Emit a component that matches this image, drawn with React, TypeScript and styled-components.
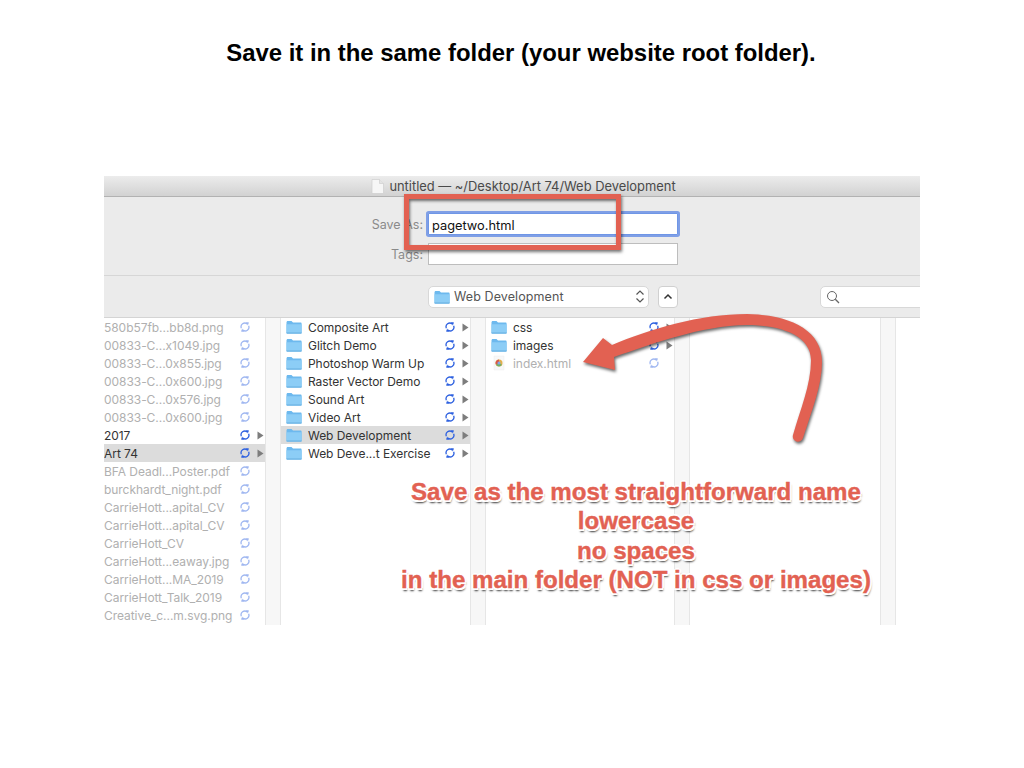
import React from "react";
import styled, { createGlobalStyle } from "styled-components";

const Global = createGlobalStyle`
  html, body { margin: 0; padding: 0; background: #fff; }
  * { box-sizing: border-box; }
`;

const Slide = styled.div`
  position: relative;
  width: 1024px;
  height: 768px;
  overflow: hidden;
  background: #fff;
  padding-top: 39px;
  font-family: "Inter", "Liberation Sans", sans-serif;
`;

const Heading = styled.h1`
  margin: 0 0 109px;
  height: 28px;
  padding-left: 18px;
  font: bold 23.9px/28px "Liberation Sans", Arial, sans-serif;
  color: #000;
  text-align: center;
`;

const Dialog = styled.div`
  width: 816px;
  height: 449px;
  margin-left: 104px;
  display: flex;
  flex-direction: column;
  background: #ebebeb;
  overflow: hidden;
`;

const TitleBar = styled.div`
  height: 21px;
  flex: none;
  display: flex;
  align-items: center;
  justify-content: center;
  gap: 5px;
  padding-left: 23px;
  background: linear-gradient(#ececec, #d2d2d2);
  border-bottom: 1px solid #b2b2b2;
  font-size: 12.9px;
  color: #4a4a4a;
`;

const Form = styled.div`
  height: 79px;
  flex: none;
  display: grid;
  grid-template-columns: 319px 250px;
  grid-auto-rows: 22px;
  column-gap: 5px;
  row-gap: 8px;
  align-content: start;
  padding-top: 16px;
  border-bottom: 1px solid #d6d6d6;
`;

const FieldLabel = styled.label`
  font-size: 12.5px;
  line-height: 24px;
  color: #8a8a8a;
  text-align: right;
`;

const NameField = styled.div`
  background: #fff;
  border: 1px solid #6f96e6;
  box-shadow: 0 0 0 2px #7f9fe6;
  border-radius: 1px;
  padding-left: 3px;
  font-size: 12.8px;
  line-height: 23px;
  color: #111;
`;

const TagsField = styled.div`
  background: #fff;
  border: 1px solid #bdbdbd;
`;

const Toolbar = styled.div`
  height: 42px;
  flex: none;
  display: flex;
  align-items: center;
  padding-left: 324px;
  border-bottom: 1px solid #d4d4d4;
`;

const Popup = styled.div`
  width: 221px;
  height: 22px;
  flex: none;
  display: flex;
  align-items: center;
  gap: 4px;
  padding: 0 3px 0 5px;
  background: #fff;
  border: 1px solid #d8d8d8;
  border-radius: 5px;
  font-size: 12.5px;
  color: #555;
  letter-spacing: 0.1px;
`;

const PopupText = styled.span`
  flex: 1;
`;

const UpButton = styled.div`
  width: 20px;
  height: 22px;
  flex: none;
  margin-left: 9px;
  display: flex;
  align-items: center;
  justify-content: center;
  background: #fff;
  border: 1px solid #d0d0d0;
  border-radius: 4px;
`;

const SearchBox = styled.div`
  width: 110px;
  height: 22px;
  margin-left: 142px;
  display: flex;
  align-items: center;
  padding-left: 5px;
  flex: none;
  background: #fff;
  border: 1px solid #d8d8d8;
  border-radius: 5px;
`;

const Columns = styled.div`
  flex: 1;
  min-height: 0;
  display: flex;
  background: #f7f7f7;
`;

const Column = styled.div<{ $w: number; $first?: boolean }>`
  width: ${(p) => p.$w}px;
  flex: none;
  margin-right: 14px;
  background: #fff;
  border-left: ${(p) => (p.$first ? "none" : "1px solid #e6e6e6")};
  border-right: 1px solid #e6e6e6;
`;

const Row = styled.div<{ $selected?: boolean; $indent: number }>`
  height: 18px;
  display: flex;
  align-items: center;
  padding-left: ${(p) => p.$indent}px;
  background: ${(p) => (p.$selected ? "#dcdcdc" : "transparent")};
`;

const RowName = styled.span<{ $dim?: boolean; $gap?: boolean }>`
  flex: 1;
  min-width: 0;
  margin-left: ${(p) => (p.$gap ? 6 : 0)}px;
  font-size: 12px;
  letter-spacing: -0.05px;
  white-space: nowrap;
  color: ${(p) => (p.$dim ? "#b0b0b0" : "#333")};
`;

const SyncSlot = styled.span<{ $dim?: boolean }>`
  flex: none;
  width: 10px;
  height: 10px;
  display: flex;
  opacity: ${(p) => (p.$dim ? 0.45 : 1)};
`;

const ArrowSlot = styled.span`
  flex: none;
  width: 15px;
  height: 10px;
  display: flex;
  align-items: center;
  justify-content: flex-end;
  padding-right: 1px;
`;

const Frame = styled.div`
  position: absolute;
  left: 404px;
  top: 194px;
  width: 217px;
  height: 56px;
  border: 5px solid #e26152;
  box-shadow: 1px 2px 3px rgba(0, 0, 0, 0.55), inset 1px 2px 3px rgba(0, 0, 0, 0.55);
`;

const ArrowArt = styled.svg`
  position: absolute;
  left: 0;
  top: 0;
  filter: drop-shadow(1px 2px 1.5px rgba(0, 0, 0, 0.6));
  pointer-events: none;
`;

const Note = styled.div`
  position: absolute;
  left: 336px;
  width: 600px;
  top: 477px;
  text-align: center;
  font: bold 24.1px/29.4px "Liberation Sans", Arial, sans-serif;
  color: #e26152;
  -webkit-text-stroke: 0.4px #e26152;
  text-shadow: -2px 0 0 #fff, 2px 0 0 #fff, 0 -2px 0 #fff, 0 2px 0 #fff,
    -1.5px -1.5px 0 #fff, 1.5px -1.5px 0 #fff, -1.5px 1.5px 0 #fff, 1.5px 1.5px 0 #fff,
    1px 3px 2px rgba(0, 0, 0, 0.8);
`;

const Folder = () => (
  <svg width="16" height="14" viewBox="0 0 16 14">
    <path d="M0.5 2.5C0.5 1.6 1 1 1.8 1H5.5L7 2.5H14.5C15.3 2.5 15.6 3 15.6 3.6V12.4C15.6 13 15.2 13.5 14.5 13.5H1.6C1 13.5 0.5 13 0.5 12.4Z" fill="#6db9ee" />
    <path d="M0.5 4.2H15.6V12.4C15.6 13 15.2 13.5 14.5 13.5H1.6C1 13.5 0.5 13 0.5 12.4Z" fill="#8ccdf6" />
    <path d="M0.5 13H15.6" stroke="#5da6dc" strokeWidth="0.8" />
  </svg>
);

const Sync = () => (
  <svg width="10" height="10" viewBox="0 0 10 10" fill="none">
    <path d="M1.4 6.3A3.7 3.7 0 0 1 7.2 2" stroke="#2f62e0" strokeWidth="1.3" />
    <path d="M8.6 3.7A3.7 3.7 0 0 1 2.8 8" stroke="#2f62e0" strokeWidth="1.3" />
    <path d="M6 0L9 .6 7.8 3.6Z" fill="#2f62e0" />
    <path d="M4 10L1 9.4 2.2 6.4Z" fill="#2f62e0" />
  </svg>
);

const Triangle = () => (
  <svg width="7" height="9" viewBox="0 0 7 9">
    <path d="M0.5 0.5L6.5 4.5 0.5 8.5Z" fill="#7d7d7d" />
  </svg>
);

const Chrome = () => (
  <svg width="16" height="16" viewBox="0 0 16 16">
    <path d="M3 1H13V15H3Z" fill="#f8f8f8" stroke="#eee" strokeWidth="0.5" />
    <circle cx="8" cy="8" r="3.5" fill="#e2b04a" />
    <path d="M8 4.5A3.5 3.5 0 0 0 5 9.8L8 8Z" fill="#d9584a" />
    <path d="M5 9.8A3.5 3.5 0 0 0 11 9.8L8 8Z" fill="#6fae6a" />
    <circle cx="8" cy="8" r="1.5" fill="#7fa7e8" />
  </svg>
);

type Item = { name: string; dim?: boolean; arrow?: boolean; selected?: boolean; icon?: "folder" | "chrome" };

const col1: Item[] = [
  { name: "580b57fb...bb8d.png", dim: true },
  { name: "00833-C...x1049.jpg", dim: true },
  { name: "00833-C...0x855.jpg", dim: true },
  { name: "00833-C...0x600.jpg", dim: true },
  { name: "00833-C...0x576.jpg", dim: true },
  { name: "00833-C...0x600.jpg", dim: true },
  { name: "2017", arrow: true },
  { name: "Art 74", arrow: true, selected: true },
  { name: "BFA Deadl...Poster.pdf", dim: true },
  { name: "burckhardt_night.pdf", dim: true },
  { name: "CarrieHott...apital_CV", dim: true },
  { name: "CarrieHott...apital_CV", dim: true },
  { name: "CarrieHott_CV", dim: true },
  { name: "CarrieHott...eaway.jpg", dim: true },
  { name: "CarrieHott...MA_2019", dim: true },
  { name: "CarrieHott_Talk_2019", dim: true },
  { name: "Creative_c...m.svg.png", dim: true },
];

const col2: Item[] = [
  "Composite Art",
  "Glitch Demo",
  "Photoshop Warm Up",
  "Raster Vector Demo",
  "Sound Art",
  "Video Art",
  "Web Development",
  "Web Deve...t Exercise",
].map((name) => ({ name, arrow: true, icon: "folder" as const, selected: name === "Web Development" }));

const col3: Item[] = [
  { name: "css", arrow: true, icon: "folder" },
  { name: "images", arrow: true, icon: "folder" },
  { name: "index.html", dim: true, icon: "chrome" },
];

const FileRow = ({ item, indent }: { item: Item; indent: number }) => (
  <Row $selected={item.selected} $indent={indent}>
    {item.icon === "folder" && <Folder />}
    {item.icon === "chrome" && <Chrome />}
    <RowName $dim={item.dim} $gap={!!item.icon}>
      {item.name}
    </RowName>
    <SyncSlot $dim={item.dim}>
      <Sync />
    </SyncSlot>
    <ArrowSlot>{item.arrow && <Triangle />}</ArrowSlot>
  </Row>
);

export default function App() {
  return (
    <Slide>
      <Global />
      <Heading>Save it in the same folder (your website root folder).</Heading>
      <Dialog>
        <TitleBar>
          <svg width="13" height="15" viewBox="0 0 13 15">
            <path d="M1 .5H8.5L12.5 4.5V14.5H1Z" fill="#f6f6f6" stroke="#cfcfcf" strokeWidth="0.7" />
            <path d="M8.5 .5V4.5H12.5" fill="#e4e4e4" stroke="#cfcfcf" strokeWidth="0.7" />
          </svg>
          <span>untitled — ~/Desktop/Art 74/Web Development</span>
        </TitleBar>
        <Form>
          <FieldLabel>Save As:</FieldLabel>
          <NameField>pagetwo.html</NameField>
          <FieldLabel>Tags:</FieldLabel>
          <TagsField />
        </Form>
        <Toolbar>
          <Popup>
            <Folder />
            <PopupText>Web Development</PopupText>
            <svg width="10" height="15" viewBox="0 0 10 15" fill="none" stroke="#555" strokeWidth="1.2">
              <path d="M1.5 5.5L5 2 8.5 5.5" />
              <path d="M1.5 9.5L5 13 8.5 9.5" />
            </svg>
          </Popup>
          <UpButton>
            <svg width="10" height="7" viewBox="0 0 10 7" fill="none" stroke="#333" strokeWidth="1.5">
              <path d="M1.5 5.5L5 2 8.5 5.5" />
            </svg>
          </UpButton>
          <SearchBox>
            <svg width="14" height="14" viewBox="0 0 14 14" fill="none" stroke="#666" strokeWidth="1">
              <circle cx="6" cy="6" r="4.5" />
              <path d="M9.3 9.3L13 13" strokeWidth="1.3" />
            </svg>
          </SearchBox>
        </Toolbar>
        <Columns>
          <Column $w={162} $first>
            {col1.map((it, i) => (
              <FileRow key={i} item={it} indent={0} />
            ))}
          </Column>
          <Column $w={191}>
            {col2.map((it, i) => (
              <FileRow key={i} item={it} indent={5} />
            ))}
          </Column>
          <Column $w={190}>
            {col3.map((it, i) => (
              <FileRow key={i} item={it} indent={5} />
            ))}
          </Column>
          <Column $w={192} />
          <Column $w={30} />
        </Columns>
      </Dialog>
      <Frame />
      <ArrowArt width="1024" height="768" viewBox="0 0 1024 768">
        <path
          d="M612 345C650 329 700 314 747 314C790 315 822 330 822 362C822 385 812 410 803 438A5 5 0 0 1 793 435C800 410 811 385 811 360C811 335 780 325 747 325C700 326 655 343 614 357L615 370L583 362L603 338Z"
          fill="#e26152"
        />
      </ArrowArt>
      <Note>
        Save as the most straightforward name
        <br />
        lowercase
        <br />
        no spaces
        <br />
        in the main folder (NOT in css or images)
      </Note>
    </Slide>
  );
}
